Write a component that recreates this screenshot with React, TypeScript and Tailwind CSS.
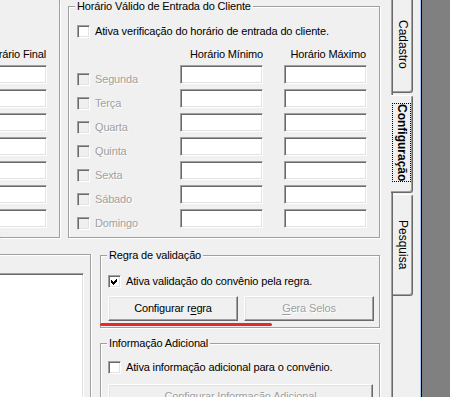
import clsx from "clsx";
import type { ReactNode } from "react";

const days = ["Segunda", "Terça", "Quarta", "Quinta", "Sexta", "Sábado", "Domingo"];

function CheckBox({ checked = false, disabled = false }: { checked?: boolean; disabled?: boolean }) {
  return (
    <span
      className={clsx(
        "relative block h-[13px] w-[13px] shrink-0 border border-t-[#a0a0a0] border-l-[#a0a0a0] border-r-white border-b-white shadow-[inset_1px_1px_0_#696969,inset_-1px_-1px_0_#e3e3e3]",
        disabled ? "bg-[#f0f0f0]" : "bg-white",
      )}
    >
      {checked ? (
        <svg className="absolute left-[1px] top-[1px]" width="9" height="9" viewBox="0 0 9 9" shapeRendering="crispEdges">
          <polygon points="1,3 3,5 7,1 7,4 3,8 1,6" fill="#000" />
        </svg>
      ) : null}
    </span>
  );
}

function Field({ className }: { className: string }) {
  return (
    <div
      className={clsx(
        "h-[19px] shrink-0 border border-t-[#a0a0a0] border-l-[#a0a0a0] border-r-white border-b-white bg-white shadow-[inset_1px_1px_0_#696969,inset_-1px_-1px_0_#e3e3e3]",
        className,
      )}
    />
  );
}

function Button({ children, disabled = false, className }: { children: ReactNode; disabled?: boolean; className: string }) {
  return (
    <div
      className={clsx(
        "flex h-[25px] shrink-0 items-center justify-center border border-t-white border-l-white border-r-[#696969] border-b-[#696969] shadow-[inset_-1px_-1px_0_#a0a0a0,inset_1px_1px_0_#e3e3e3]",
        disabled && "text-[#a0a0a0] [text-shadow:1px_1px_0_#fff]",
        className,
      )}
    >
      <span>{children}</span>
    </div>
  );
}

function GroupBox({ title, className, children }: { title: string; className: string; children: ReactNode }) {
  return (
    <fieldset
      className={clsx(
        "m-0 min-w-0 shrink-0 border border-[#a0a0a0] p-0 shadow-[inset_1px_1px_0_#fff,1px_1px_0_#fff]",
        className,
      )}
    >
      <legend className="ml-[6px] bg-[#f0f0f0] px-[2px] leading-[13px]">{title}</legend>
      {children}
    </fieldset>
  );
}

export default function App() {
  return (
    <div className="relative flex h-[397px] w-[450px] overflow-hidden bg-[#f0f0f0] font-['Liberation_Sans',Arial,sans-serif] text-[11px] leading-[13px] tracking-[-0.15px] text-black">
      {/* form page */}
      <div className="flex w-[391px] shrink-0 flex-col">
        <div className="flex h-[239px] shrink-0 items-start">
          <div className="flex h-[238px] w-[60px] shrink-0 flex-col items-end border-r border-b border-[#a0a0a0] pr-[12px] shadow-[1px_1px_0_#fff]">
            <div className="mt-[48px] mr-[1px] h-[13px] whitespace-nowrap">Horário Final</div>
            <div className="mt-[4px] flex flex-col items-end gap-[5px]">
              {days.map((d) => (
                <Field key={d} className="w-[100px]" />
              ))}
            </div>
          </div>

          <GroupBox title="Horário Válido de Entrada do Cliente" className="ml-[8px] h-[238px] w-[312px]">
            <div className="pl-[8px]">
              <div className="mt-[12px] flex h-[13px] items-center gap-[5px]">
                <CheckBox />
                <span className="whitespace-nowrap">Ativa verificação do horário de entrada do cliente.</span>
              </div>
              <div className="mt-[10px] flex h-[13px] whitespace-nowrap">
                <div className="w-[103px]" />
                <div className="w-[83px] text-right">Horário Mínimo</div>
                <div className="ml-[21px] w-[83px] pr-[1px] text-right">Horário Máximo</div>
              </div>
              <div className="mt-[4px] flex flex-col gap-[5px]">
                {days.map((d) => (
                  <div key={d} className="flex h-[19px] items-start">
                    <div className="mt-[8px] flex h-[13px] w-[103px] items-center gap-[5px] text-[#a0a0a0] [text-shadow:1px_1px_0_#fff]">
                      <CheckBox disabled />
                      <span>{d}</span>
                    </div>
                    <Field className="w-[83px]" />
                    <Field className="ml-[21px] w-[83px]" />
                  </div>
                ))}
              </div>
            </div>
          </GroupBox>
        </div>

        <div className="flex flex-1 items-start">
          <div className="mt-[15px] flex h-[200px] w-[91px] shrink-0 flex-col items-end border-t border-r border-[#a0a0a0] pr-[6px] shadow-[inset_0_1px_0_#fff,1px_0_0_#fff]">
            <div className="mt-[18px] h-[200px] w-[150px] shrink-0 border border-t-[#a0a0a0] border-l-[#a0a0a0] border-r-white border-b-white bg-white shadow-[inset_1px_1px_0_#696969,inset_-1px_-1px_0_#e3e3e3]" />
          </div>

          <div className="ml-[9px] flex w-[280px] flex-col">
            <GroupBox title="Regra de validação" className="mt-[10px] h-[79px] w-[280px]">
              <div className="pl-[7px]">
                <div className="mt-[13px] flex h-[13px] items-center gap-[5px]">
                  <CheckBox checked />
                  <span className="whitespace-nowrap">Ativa validação do convênio pela regra.</span>
                </div>
                <div className="mt-[8px] flex gap-[6px]">
                  <Button className="w-[130px]">
                    Configurar r<span className="underline underline-offset-[2px]">e</span>gra
                  </Button>
                  <Button disabled className="w-[130px]">
                    <span className="underline underline-offset-[2px]">G</span>era Selos
                  </Button>
                </div>
              </div>
            </GroupBox>

            <GroupBox title="Informação Adicional" className="mt-[9px] h-[100px] w-[280px]">
              <div className="pl-[7px]">
                <div className="mt-[11px] flex h-[13px] items-center gap-[5px]">
                  <CheckBox />
                  <span className="whitespace-nowrap">Ativa informação adicional para o convênio.</span>
                </div>
                <Button disabled className="mt-[10px] w-[265px]">
                  Configurar Informação Adicional
                </Button>
              </div>
            </GroupBox>
          </div>
        </div>
      </div>

      {/* vertical tabs */}
      <div className="flex w-[29px] shrink-0 flex-col border-l border-[#a0a0a0] text-[12px] tracking-normal shadow-[inset_1px_0_0_#696969]">
        <div className="ml-[1px] flex h-[93px] w-[20px] shrink-0 justify-center rounded-br-[3px] border-r border-b border-[#696969] pt-[20px] shadow-[inset_-1px_-1px_0_#a0a0a0]">
          <span className="leading-[13px] [writing-mode:vertical-rl]">Cadastro</span>
        </div>
        <div className="relative -ml-[1px] mt-[2px] flex h-[98px] w-[22px] shrink-0 justify-center rounded-r-[3px] border-t border-r border-b border-t-white border-r-[#696969] border-b-[#696969] bg-[#f0f0f0] pt-[7px] shadow-[inset_-1px_-1px_0_#a0a0a0]">
          <span className="self-start border border-dotted border-black py-[2px] font-bold leading-[13px] [writing-mode:vertical-rl]">
            Configuração
          </span>
        </div>
        <div className="ml-[1px] mt-[1px] flex h-[102px] w-[20px] shrink-0 justify-center rounded-r-[3px] border-t border-r border-b border-t-white border-r-[#696969] border-b-[#696969] pt-[25px] shadow-[inset_-1px_-1px_0_#a0a0a0]">
          <span className="leading-[13px] [writing-mode:vertical-rl]">Pesquisa</span>
        </div>
      </div>
      <div className="w-[1px] shrink-0 bg-[#a6caf0]" />
      <div className="w-[1px] shrink-0 bg-black" />
      <div className="flex-1 bg-[#808080]" />

      {/* red annotation stroke */}
      <div className="absolute left-[100px] top-[323px] h-[3px] w-[172px] rounded-full bg-[#e42b2b]" />
    </div>
  );
}
